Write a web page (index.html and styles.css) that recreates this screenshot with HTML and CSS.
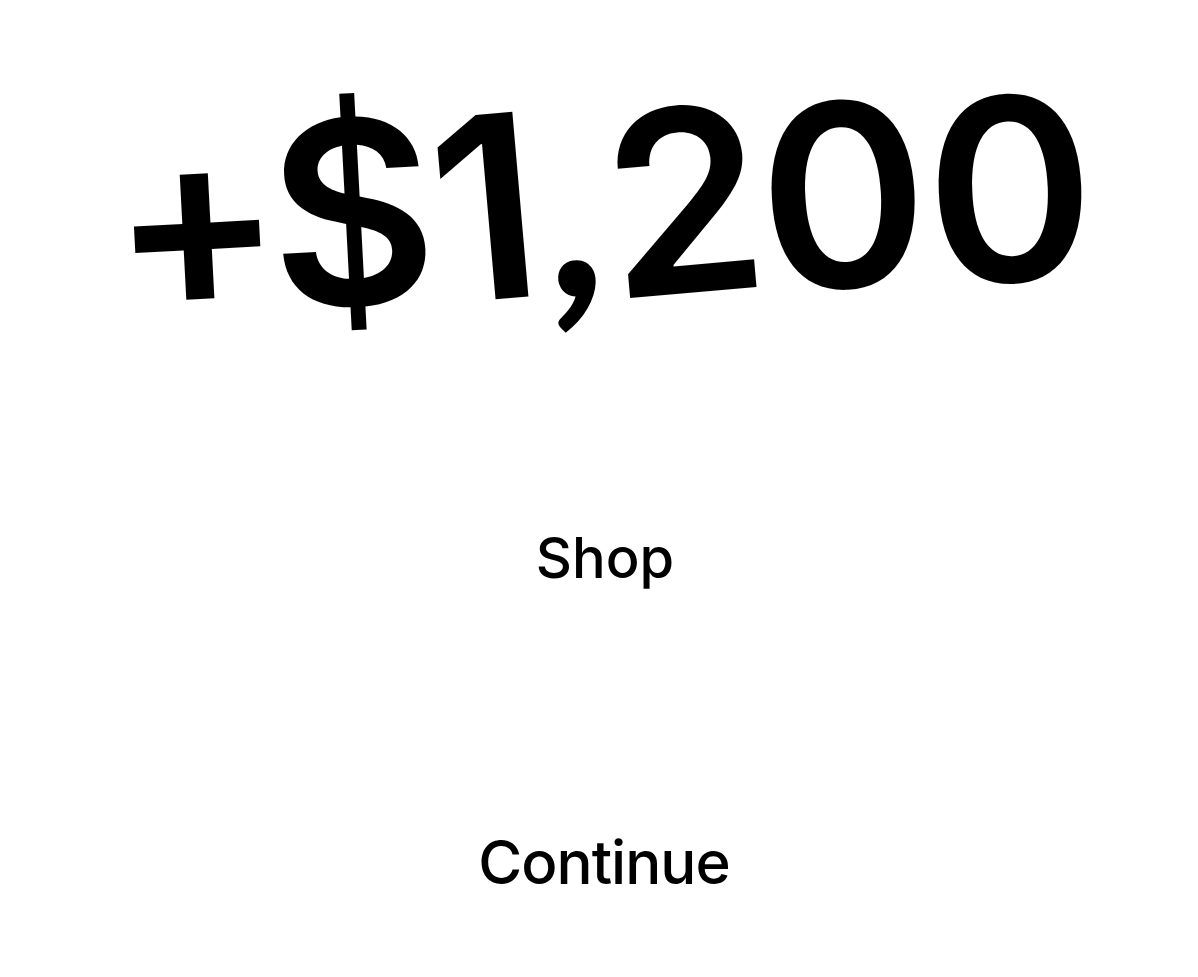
FILE: index.html
```html
<!DOCTYPE html>
<html lang="en">
<head>
<meta charset="utf-8">
<title>Reward</title>
<link rel="stylesheet" href="styles.css">
</head>
<body>
<main class="screen">
  <div class="amount-wrap">
    <h1 class="amount"><span class="ch ch-plus">+</span><span class="ch ch-dollar">$</span><span class="ch ch-one">1</span><span class="ch ch-comma">,</span><span class="ch ch-two">2</span><span class="ch ch-zero1">0</span><span class="ch ch-zero2">0</span></h1>
  </div>
  <div class="shop">Shop</div>
  <div class="continue">Continue</div>
</main>
</body>
</html>
```
FILE: styles.css
```css
html, body {
  margin: 0;
  padding: 0;
  background: #ffffff;
}
body {
  width: 1198px;
  height: 977px;
  overflow: hidden;
  font-family: "Inter", "Liberation Sans", sans-serif;
  color: #000;
  font-feature-settings: "liga" 0, "calt" 0;
}
.screen {
  display: flex;
  flex-direction: column;
  align-items: center;
  height: 977px;
}
.amount-wrap {
  height: 400px;
  display: flex;
  align-items: center;
  justify-content: center;
  width: 100%;
  padding-left: 2px;
  box-sizing: border-box;
}
.amount {
  margin: 0;
  font-size: 255px;
  font-weight: 600;
  line-height: 1;
  letter-spacing: -5px;
  white-space: nowrap;
  transform: rotate(-2deg);
}
.ch {
  display: inline-block;
}
.ch-plus { transform: rotate(-1deg); margin-right: -8px; }
.ch-dollar { transform: rotate(-1deg); }
.ch-one { transform: rotate(-3deg); margin-left: 2px; }
.ch-comma {
  font-family: "Lato", "Inter", sans-serif;
  font-weight: 700;
  transform: rotate(4deg);
  margin-left: 16px;
}
.ch-two { transform: rotate(-3deg); }
.ch-zero1 { transform: rotate(-1deg); }
.ch-zero2 { transform: rotate(0deg); margin-left: 4px; }
.shop {
  margin-top: 130px;
  padding-left: 12px;
  font-size: 56px;
  font-weight: 500;
  line-height: 1;
}
.continue {
  margin-top: 246px;
  padding-left: 10px;
  font-size: 60px;
  font-weight: 500;
  letter-spacing: -1px;
  line-height: 1;
}
```
